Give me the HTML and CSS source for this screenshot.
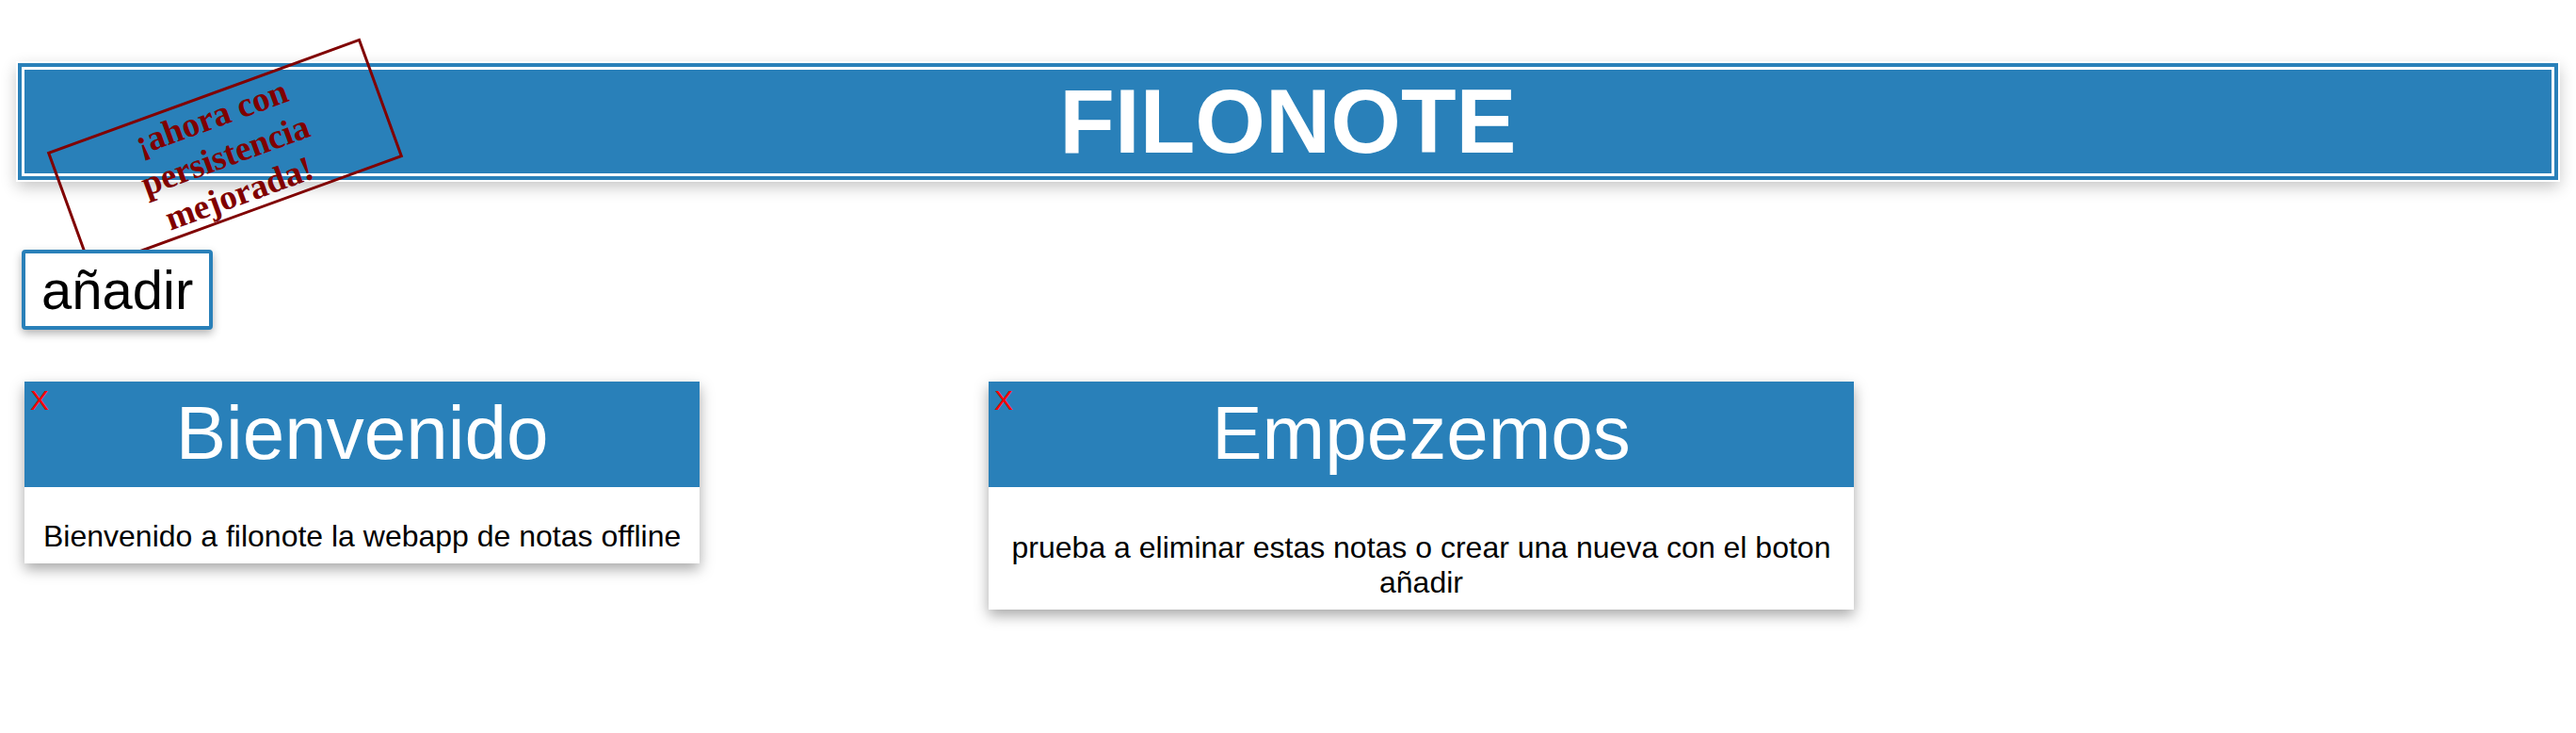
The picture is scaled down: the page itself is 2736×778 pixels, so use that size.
FILE: index.html
```html
<!DOCTYPE html>
<html lang="es">
<head>
<meta charset="utf-8">
<title>Filonote</title>
<link rel="stylesheet" href="styles.css">
</head>
<body>
<div class="page">
  <header class="banner">
    <h1 class="title">FILONOTE</h1>
  </header>
  <div class="stamp">¡ahora con<br>persistencia<br>mejorada!</div>
  <button class="add" type="button">añadir</button>
  <section class="notes">
    <article class="note">
      <span class="close">X</span>
      <h2 class="note-title">Bienvenido</h2>
      <p class="note-text">Bienvenido a filonote la webapp de notas offline</p>
    </article>
    <article class="note">
      <span class="close">X</span>
      <h2 class="note-title">Empezemos</h2>
      <p class="note-text note-text--spaced">prueba a eliminar estas notas o crear una nueva con el boton añadir</p>
    </article>
  </section>
</div>
</body>
</html>
```

FILE: styles.css
```css
html, body {
  margin: 0;
  background: #ffffff;
}

body {
  font-family: "Liberation Sans", Arial, sans-serif;
  color: #000;
}

.page {
  position: relative;
  padding: 71px 23px 40px;
}

.banner {
  display: block;
}

.title {
  margin: 0;
  background: #2980b9;
  color: #ffffff;
  font-family: "Liberation Sans", Arial, sans-serif;
  font-size: 96px;
  font-weight: bold;
  line-height: normal;
  text-align: center;
  border: 3px solid #ffffff;
  box-shadow:
    0 0 0 4px #2980b9,
    0 0 0 6px #ffffff,
    0 6px 16px 5px rgba(0, 0, 0, 0.24);
}

.stamp {
  position: absolute;
  z-index: 1;
  left: 62px;
  top: 97px;
  box-sizing: border-box;
  width: 354px;
  height: 134px;
  padding: 0;
  border: 3px solid #800000;
  color: #800000;
  font-family: "Liberation Serif", "Times New Roman", serif;
  font-weight: bold;
  font-size: 37px;
  line-height: normal;
  text-align: center;
  transform: rotate(-20deg);
}

.add {
  position: relative;
  z-index: 2;
  display: block;
  margin: 78px 0 0;
  padding: 5px 17px;
  background: #ffffff;
  color: #000;
  border: 4px solid #2980b9;
  border-radius: 4px;
  font-family: "Liberation Sans", Arial, sans-serif;
  font-size: 58px;
  line-height: normal;
  box-shadow: 0 4px 10px rgba(0, 0, 0, 0.3);
}

.notes {
  display: grid;
  grid-template-columns: repeat(2, 1024px);
  align-items: start;
  margin: 55px 0 0 3px;
}

.note {
  position: relative;
  justify-self: start;
  width: fit-content;
  max-width: 919px;
  background: #ffffff;
  text-align: center;
  box-shadow: 0 6px 14px rgba(0, 0, 0, 0.35);
}

.close {
  position: absolute;
  top: 3px;
  left: 6px;
  color: #ff0000;
  font-size: 30px;
  line-height: normal;
}

.note-title {
  margin: 0;
  padding: 9px 20px 11px;
  background: #2980b9;
  color: #ffffff;
  font-size: 80px;
  font-weight: normal;
  line-height: normal;
}

.note-text {
  margin: 0;
  padding: 34px 20px 10px;
  font-size: 32px;
  line-height: normal;
}

.note-text--spaced {
  padding-top: 46px;
}
```
